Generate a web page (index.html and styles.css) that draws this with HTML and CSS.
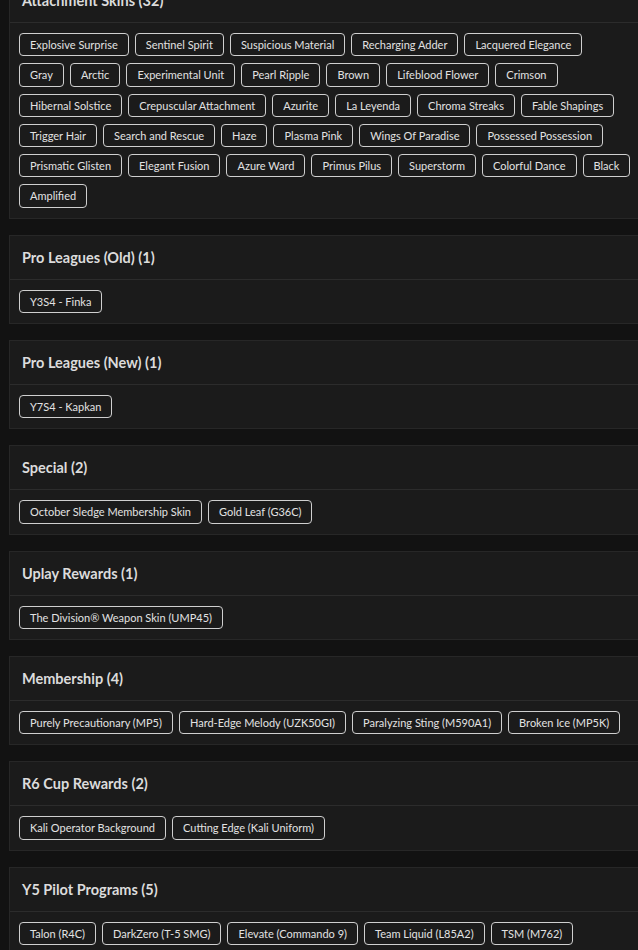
FILE: index.html
```html
<!DOCTYPE html>
<html lang="en">
<head>
<meta charset="utf-8">
<title>Skins</title>
<link rel="stylesheet" href="styles.css">
</head>
<body>
<main class="list">
  <section class="card">
    <h2 class="card-title">Attachment Skins (32)</h2>
    <div class="card-body">
      <div class="tag-row">
        <span class="tag">Explosive Surprise</span>
        <span class="tag">Sentinel Spirit</span>
        <span class="tag">Suspicious Material</span>
        <span class="tag">Recharging Adder</span>
        <span class="tag">Lacquered Elegance</span>
      </div>
      <div class="tag-row">
        <span class="tag">Gray</span>
        <span class="tag">Arctic</span>
        <span class="tag">Experimental Unit</span>
        <span class="tag">Pearl Ripple</span>
        <span class="tag">Brown</span>
        <span class="tag">Lifeblood Flower</span>
        <span class="tag">Crimson</span>
      </div>
      <div class="tag-row">
        <span class="tag">Hibernal Solstice</span>
        <span class="tag">Crepuscular Attachment</span>
        <span class="tag">Azurite</span>
        <span class="tag">La Leyenda</span>
        <span class="tag">Chroma Streaks</span>
        <span class="tag">Fable Shapings</span>
      </div>
      <div class="tag-row">
        <span class="tag">Trigger Hair</span>
        <span class="tag">Search and Rescue</span>
        <span class="tag">Haze</span>
        <span class="tag">Plasma Pink</span>
        <span class="tag">Wings Of Paradise</span>
        <span class="tag">Possessed Possession</span>
      </div>
      <div class="tag-row">
        <span class="tag">Prismatic Glisten</span>
        <span class="tag">Elegant Fusion</span>
        <span class="tag">Azure Ward</span>
        <span class="tag">Primus Pilus</span>
        <span class="tag">Superstorm</span>
        <span class="tag">Colorful Dance</span>
        <span class="tag">Black</span>
      </div>
      <div class="tag-row">
        <span class="tag">Amplified</span>
      </div>
    </div>
  </section>
  <section class="card">
    <h2 class="card-title">Pro Leagues (Old) (1)</h2>
    <div class="card-body">
      <div class="tag-row">
        <span class="tag">Y3S4 - Finka</span>
      </div>
    </div>
  </section>
  <section class="card">
    <h2 class="card-title">Pro Leagues (New) (1)</h2>
    <div class="card-body">
      <div class="tag-row">
        <span class="tag">Y7S4 - Kapkan</span>
      </div>
    </div>
  </section>
  <section class="card">
    <h2 class="card-title">Special (2)</h2>
    <div class="card-body">
      <div class="tag-row">
        <span class="tag">October Sledge Membership Skin</span>
        <span class="tag">Gold Leaf (G36C)</span>
      </div>
    </div>
  </section>
  <section class="card">
    <h2 class="card-title">Uplay Rewards (1)</h2>
    <div class="card-body">
      <div class="tag-row">
        <span class="tag">The Division® Weapon Skin (UMP45)</span>
      </div>
    </div>
  </section>
  <section class="card">
    <h2 class="card-title">Membership (4)</h2>
    <div class="card-body">
      <div class="tag-row">
        <span class="tag">Purely Precautionary (MP5)</span>
        <span class="tag">Hard-Edge Melody (UZK50GI)</span>
        <span class="tag">Paralyzing Sting (M590A1)</span>
        <span class="tag">Broken Ice (MP5K)</span>
      </div>
    </div>
  </section>
  <section class="card">
    <h2 class="card-title">R6 Cup Rewards (2)</h2>
    <div class="card-body">
      <div class="tag-row">
        <span class="tag">Kali Operator Background</span>
        <span class="tag">Cutting Edge (Kali Uniform)</span>
      </div>
    </div>
  </section>
  <section class="card">
    <h2 class="card-title">Y5 Pilot Programs (5)</h2>
    <div class="card-body">
      <div class="tag-row">
        <span class="tag">Talon (R4C)</span>
        <span class="tag">DarkZero (T-5 SMG)</span>
        <span class="tag">Elevate (Commando 9)</span>
        <span class="tag">Team Liquid (L85A2)</span>
        <span class="tag">TSM (M762)</span>
      </div>
    </div>
  </section>
</main>
</body>
</html>
```
FILE: styles.css
```css
html, body {
  margin: 0;
  overflow: hidden;
  background: #121212;
}

body {
  font-family: Lato, "Open Sans", sans-serif;
}

.list {
  margin-top: -22px;
  padding-left: 9px;
  display: flex;
  flex-direction: column;
  gap: 16px;
}

.card {
  box-sizing: border-box;
  width: 636px;
  background: #1b1b1b;
  border: 1px solid #272727;
}

.card-title {
  margin: 0;
  height: 43px;
  padding: 0 12px;
  display: flex;
  align-items: center;
  font-size: 14.5px;
  font-weight: 700;
  color: #dcdcdc;
  border-bottom: 1px solid #2c2c2c;
}

.card-body {
  display: flex;
  flex-direction: column;
  gap: 7px;
  padding: 10px 9px;
}

.tag-row {
  display: flex;
  gap: 6px;
}

.tag {
  font-size: 11px;
  line-height: 15.3px;
  padding: 3px 10px;
  border: 1px solid #cfcfcf;
  border-radius: 4px;
  color: #e2e2e2;
  white-space: nowrap;
}
```
